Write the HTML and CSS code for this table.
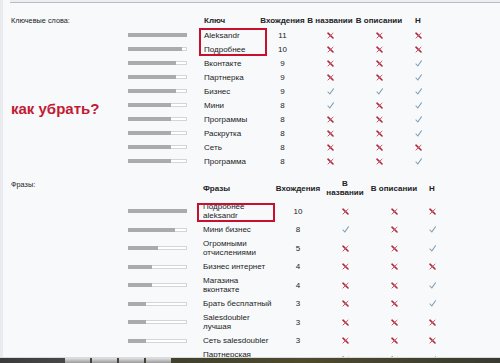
FILE: index.html
```html
<!DOCTYPE html>
<html lang="ru">
<head>
<meta charset="utf-8">
<title>Ключевые слова</title>
<link rel="stylesheet" href="styles.css">
</head>
<body>
<div class="page">
  <div class="topframe"></div>

  <section class="sec sec1">
    <div class="side">
      <div class="label">Ключевые слова:</div>
      <div class="ask">как убрать?</div>
    </div>
    <div class="tbl t1">
      <div class="h"></div><div class="h name">Ключ</div><div class="h c">Вхождения</div><div class="h c">В названии</div><div class="h c">В описании</div><div class="h c">Н</div>

      <div class="b"><div class="bar"><div class="fill" style="width:100%"></div></div></div><div class="name">Aleksandr</div><div class="c">11</div><div class="c"><i class="x"></i></div><div class="c"><i class="x"></i></div><div class="c"><i class="x"></i></div>
      <div class="b"><div class="bar"><div class="fill" style="width:92%"></div></div></div><div class="name">Подробнее</div><div class="c">10</div><div class="c"><i class="x"></i></div><div class="c"><i class="x"></i></div><div class="c"><i class="x"></i></div>
      <div class="b"><div class="bar"><div class="fill" style="width:81%"></div></div></div><div class="name">Вконтакте</div><div class="c">9</div><div class="c"><i class="x"></i></div><div class="c"><i class="x"></i></div><div class="c"><i class="v"></i></div>
      <div class="b"><div class="bar"><div class="fill" style="width:81%"></div></div></div><div class="name">Партнерка</div><div class="c">9</div><div class="c"><i class="x"></i></div><div class="c"><i class="x"></i></div><div class="c"><i class="v"></i></div>
      <div class="b"><div class="bar"><div class="fill" style="width:81%"></div></div></div><div class="name">Бизнес</div><div class="c">9</div><div class="c"><i class="v"></i></div><div class="c"><i class="v"></i></div><div class="c"><i class="v"></i></div>
      <div class="b"><div class="bar"><div class="fill" style="width:73%"></div></div></div><div class="name">Мини</div><div class="c">8</div><div class="c"><i class="v"></i></div><div class="c"><i class="x"></i></div><div class="c"><i class="v"></i></div>
      <div class="b"><div class="bar"><div class="fill" style="width:73%"></div></div></div><div class="name">Программы</div><div class="c">8</div><div class="c"><i class="x"></i></div><div class="c"><i class="x"></i></div><div class="c"><i class="v"></i></div>
      <div class="b"><div class="bar"><div class="fill" style="width:73%"></div></div></div><div class="name">Раскрутка</div><div class="c">8</div><div class="c"><i class="x"></i></div><div class="c"><i class="x"></i></div><div class="c"><i class="v"></i></div>
      <div class="b"><div class="bar"><div class="fill" style="width:73%"></div></div></div><div class="name">Сеть</div><div class="c">8</div><div class="c"><i class="x"></i></div><div class="c"><i class="x"></i></div><div class="c"><i class="x"></i></div>
      <div class="b"><div class="bar"><div class="fill" style="width:73%"></div></div></div><div class="name">Программа</div><div class="c">8</div><div class="c"><i class="x"></i></div><div class="c"><i class="x"></i></div><div class="c"><i class="v"></i></div>

      <div class="mark m1"></div>
    </div>
  </section>

  <section class="sec sec2">
    <div class="side">
      <div class="label">Фразы:</div>
    </div>
    <div class="tbl t2">
      <div class="h"></div><div class="h name">Фразы</div><div class="h c">Вхождения</div><div class="h c">В<br>названии</div><div class="h c">В описании</div><div class="h c">Н</div>

      <div class="b"><div class="bar"><div class="fill" style="width:100%"></div></div></div><div class="name">Подробнее<br>aleksandr</div><div class="c">10</div><div class="c"><i class="x"></i></div><div class="c"><i class="x"></i></div><div class="c"><i class="x"></i></div>
      <div class="b"><div class="bar"><div class="fill" style="width:80%"></div></div></div><div class="name">Мини бизнес</div><div class="c">8</div><div class="c"><i class="v"></i></div><div class="c"><i class="x"></i></div><div class="c"><i class="v"></i></div>
      <div class="b"><div class="bar"><div class="fill" style="width:51%"></div></div></div><div class="name">Огромными<br>отчислениями</div><div class="c">5</div><div class="c"><i class="x"></i></div><div class="c"><i class="x"></i></div><div class="c"><i class="v"></i></div>
      <div class="b"><div class="bar"><div class="fill" style="width:41%"></div></div></div><div class="name">Бизнес интернет</div><div class="c">4</div><div class="c"><i class="x"></i></div><div class="c"><i class="x"></i></div><div class="c"><i class="x"></i></div>
      <div class="b"><div class="bar"><div class="fill" style="width:41%"></div></div></div><div class="name">Магазина<br>вконтакте</div><div class="c">4</div><div class="c"><i class="x"></i></div><div class="c"><i class="x"></i></div><div class="c"><i class="v"></i></div>
      <div class="b"><div class="bar"><div class="fill" style="width:31%"></div></div></div><div class="name">Брать бесплатный</div><div class="c">3</div><div class="c"><i class="x"></i></div><div class="c"><i class="x"></i></div><div class="c"><i class="v"></i></div>
      <div class="b"><div class="bar"><div class="fill" style="width:31%"></div></div></div><div class="name">Salesdoubler<br>лучшая</div><div class="c">3</div><div class="c"><i class="x"></i></div><div class="c"><i class="x"></i></div><div class="c"><i class="x"></i></div>
      <div class="b"><div class="bar"><div class="fill" style="width:31%"></div></div></div><div class="name">Сеть salesdoubler</div><div class="c">3</div><div class="c"><i class="x"></i></div><div class="c"><i class="x"></i></div><div class="c"><i class="x"></i></div>
      <div class="b"><div class="bar"><div class="fill" style="width:31%"></div></div></div><div class="name">Партнерская<br>программа</div><div class="c">3</div><div class="c"><i class="x"></i></div><div class="c"><i class="x"></i></div><div class="c"><i class="v"></i></div>

      <div class="mark m2"></div>
    </div>
  </section>
</div>

<div class="taskbar">
  <span class="tb-btn"></span><span class="tb-btn"></span><span class="tb-btn"></span><span class="tb-btn"></span>
</div>
</body>
</html>
```

FILE: styles.css
```css
html, body {
  margin: 0;
  padding: 0;
}
body {
  width: 500px;
  height: 363px;
  overflow: hidden;
  background: #f7f9fb;
  font-family: "Liberation Sans", Arial, sans-serif;
  font-size: 8px;
  color: #232323;
  box-shadow: inset 3px 0 0 #e9ebee;
}
.page {
  display: flex;
  flex-direction: column;
}
.topframe {
  margin-left: 10px;
  height: 2px;
  background: #eceef1;
  border-bottom: 1px solid #b9bcc0;
}
.sec {
  display: flex;
  padding-left: 11px;
}
.sec1 {
  margin-top: 12.5px;
}
.sec2 {
  margin-top: 8px;
}
.side {
  width: 117px;
  flex: none;
  display: flex;
  flex-direction: column;
}
.label {
  font-size: 7.3px;
  line-height: 9px;
  height: 9px;
  white-space: nowrap;
}
.sec2 .label {
  margin-top: 3.5px;
}
.ask {
  margin-top: 75px;
  font-size: 15px;
  font-weight: bold;
  line-height: 18px;
  color: #c21b33;
  white-space: nowrap;
}
.tbl {
  position: relative;
  display: grid;
  align-items: center;
}
.t1 {
  grid-template-columns: 76px 57px 43px 52px 46px 32px;
  grid-template-rows: 12.5px repeat(10, 14px);
}
.t2 {
  grid-template-columns: 75px 73px 44px 50px 48px 28px;
  grid-template-rows: 26px repeat(9, 18.5px);
}
.h {
  font-weight: bold;
  line-height: 9px;
  white-space: nowrap;
}
.t1 .h {
  align-self: start;
}
.t2 .h {
  margin-top: -2px;
}
.name {
  line-height: 9px;
  white-space: nowrap;
}
.c {
  text-align: center;
  line-height: 9px;
  display: flex;
  justify-content: center;
  align-items: center;
}
.b {
  display: flex;
  align-items: center;
}
.bar {
  width: 59px;
  height: 4px;
  background: #ffffff;
  box-shadow: inset 0 0 0 1px #d3d5d8;
  display: flex;
}
.fill {
  height: 100%;
  background: #a9abad;
}
i.x, i.v {
  display: block;
  width: 7px;
  height: 7px;
  background-repeat: no-repeat;
  background-size: 7px 7px;
}
i.x {
  background-image: url("data:image/svg+xml;utf8,<svg xmlns='http://www.w3.org/2000/svg' viewBox='0 0 7 7'><path d='M1 1.2 L6 6' stroke='%23b2283c' stroke-width='1.6' stroke-linecap='round'/><path d='M6 1.2 L1 6' stroke='%23c9566a' stroke-width='1' stroke-linecap='round'/></svg>");
}
i.v {
  background-image: url("data:image/svg+xml;utf8,<svg xmlns='http://www.w3.org/2000/svg' viewBox='0 0 7 7'><path d='M1 4 L2.8 6 L6.5 0.8' fill='none' stroke='%237f9bb2' stroke-width='1.1' stroke-linecap='round' stroke-linejoin='round'/></svg>");
}
.mark {
  position: absolute;
  border: 2px solid #c8102e;
  box-sizing: border-box;
  pointer-events: none;
}
.m1 {
  left: 71px;
  top: 12.5px;
  width: 68px;
  height: 28px;
}
.m2 {
  left: 69px;
  top: 27px;
  width: 78px;
  height: 19px;
}
.taskbar {
  position: fixed;
  left: 0;
  right: 0;
  bottom: 0;
  height: 5px;
  display: flex;
  gap: 2px;
  padding-left: 65px;
  background: linear-gradient(90deg, #3b3b3b 0, #474747 60px, #41412d 180px, #4d4a2e 300px, #3a3b30 500px);
  border-top: 1px solid #d9dbdd;
}
.tb-btn {
  width: 25px;
  height: 5px;
  background: linear-gradient(#e2e2e2, #9a9a9a);
}
```
